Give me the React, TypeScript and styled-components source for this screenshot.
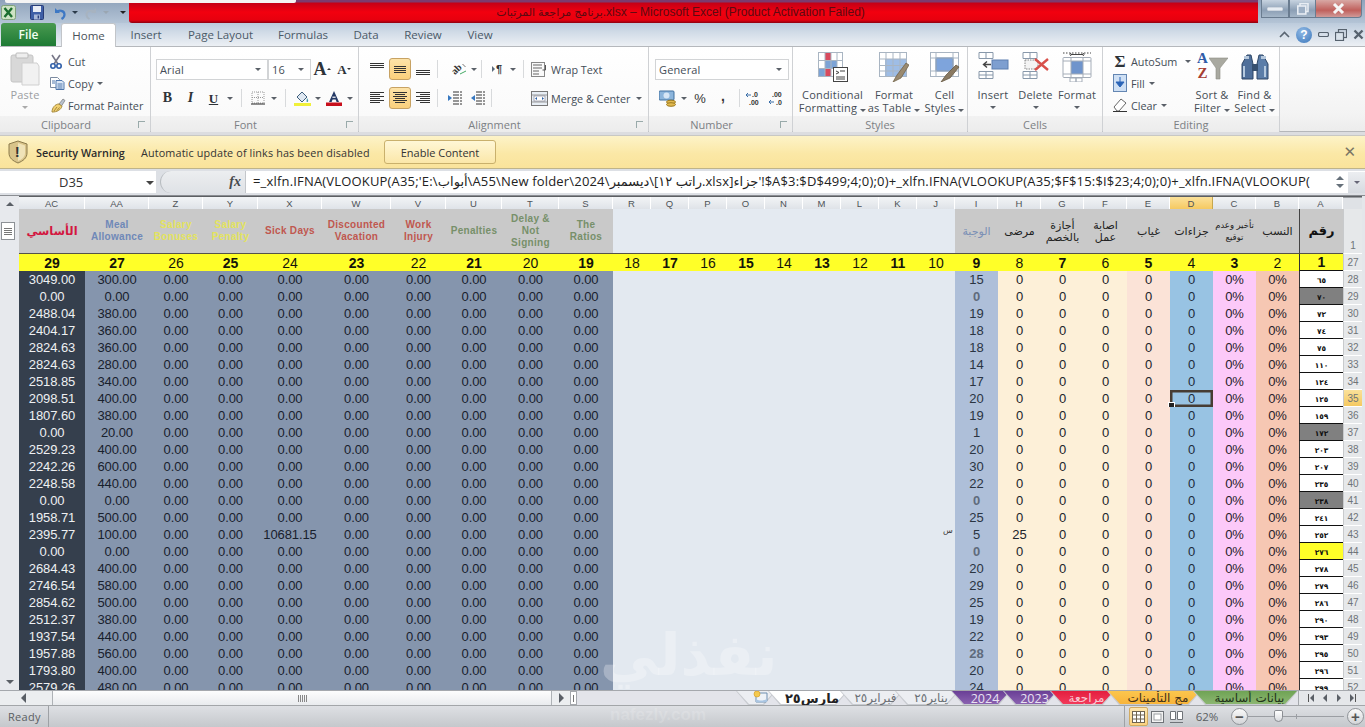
import React from "react";
import styled, { createGlobalStyle } from "styled-components";

const Global = createGlobalStyle`
  html, body { margin: 0; padding: 0; overflow: hidden; background: #fff; }
  * { box-sizing: border-box; }
`;
const UI = `"Open Sans", "Noto Sans", "DejaVu Sans", sans-serif`;
const CELL = `"Liberation Sans", "DejaVu Sans", sans-serif`;

const Root = styled.div`
  position: relative; width: 1365px; height: 727px; overflow: hidden;
  display: flex; flex-direction: column; font-family: ${UI}; font-size: 11px; color: #444d57;
`;
/* ---------- title bar ---------- */
const TitleBar = styled.div`
  height: 23px; flex: none; display: flex; background: linear-gradient(#8fa3bb, #b4c4d6);
`;
const TopSliver = styled.div`
  position: absolute; left: 5px; top: 0; width: 291px; height: 3px; background: #f4f4f4; border-radius: 0 0 2px 2px;
`;
const Qat = styled.div`
  width: 129px; flex: none; display: flex; align-items: center; padding-top: 2px;
`;
const QatSlot = styled.div<{ $w: number }>`
  width: ${p => p.$w}px; flex: none; display: flex; align-items: center; justify-content: center;
`;
const RedBar = styled.div`
  flex: 1; position: relative; display: flex; align-items: center; justify-content: center; white-space: pre;
  background: linear-gradient(#7c3b6e 0, #7c3b6e 2px, #c40016 3px, #f2000f 12px, #e6000e 20px, #8d0010 23px);
  border-radius: 0 0 0 3px; color: #5c0a12; font-size: 12px; font-family: ${CELL}; padding: 1px 26px 0 0;
`;
const TitleArabic = styled.span`
  font-size: 11px;
`;
const WinControls = styled.div`
  width: 107px; flex: none; display: flex; padding: 0 2px 5px 3px; align-items: stretch;
`;
const WinBtn = styled.div<{ $w: number; $close?: boolean }>`
  width: ${p => p.$w}px; flex: none; display: flex; align-items: center; justify-content: center;
  border: 1px solid #6a7c90; border-top: none; border-left-width: ${p => (p.$close ? 0 : 1)}px;
  background: ${p => (p.$close ? "linear-gradient(#d8a8a4, #c0605c 60%, #d09a98)" : "linear-gradient(#c7d3e0, #8c9fb5 60%, #a5b6c8)")};
  border-radius: ${p => (p.$close ? "0 0 4px 0" : "0")};
`;
/* ---------- tabs ---------- */
const TabStrip = styled.div`
  height: 24px; flex: none; display: flex; align-items: flex-end; padding-left: 1px;
  background: linear-gradient(#bccbdc, #d3dde8 45%, #ecf0f4); border-bottom: 1px solid #b5b8bc;
`;
const FileTab = styled.div`
  width: 55px; height: 23px; display: flex; align-items: center; justify-content: center; margin-right: 5px;
  background: linear-gradient(#4a9a50, #1d7a34); color: #f2fff2; font-size: 12px; font-weight: 600; border-radius: 3px 3px 0 0;
`;
const RibbonTab = styled.div<{ $on?: boolean; $w: number }>`
  width: ${p => p.$w}px; height: 23px; display: flex; align-items: center; justify-content: center; font-size: 11.5px;
  color: ${p => (p.$on ? "#4a525a" : "#4b5a68")};
  ${p => (p.$on ? "background:#fff; border:1px solid #c2c5c9; border-bottom:none; border-radius:3px 3px 0 0; margin-bottom:-1px; height:24px;" : "")}
`;
const StripEnd = styled.div`
  margin-left: auto; display: flex; align-items: center; height: 23px; padding-right: 1px; gap: 6px;
`;
/* ---------- ribbon ---------- */
const Ribbon = styled.div`
  height: 89px; flex: none; display: flex; background: #dcdde0; padding-bottom: 3px; border-bottom: 1px solid #c8c8c4;
`;
const Group = styled.div<{ $w: number }>`
  width: ${p => p.$w}px; flex: none; display: flex; flex-direction: column; border-right: 1px solid #cfd1d4; border-bottom: 1px solid #b5b7ba;
`;
const GroupBody = styled.div<{ $pad?: number }>`
  height: 69px; flex: none; display: flex; padding-left: ${p => p.$pad ?? 0}px; background: linear-gradient(#fff, #fafafa);
`;
const GroupLabel = styled.div<{ $launch?: boolean }>`
  position: relative; flex: 1; display: flex; align-items: center; justify-content: center; padding: 1px ${p => (p.$launch ? 18 : 0)}px 0 0;
  color: #7c8084; font-size: 11px; background: linear-gradient(#f2f2f2, #ececec);
`;
const Launcher = styled.span`
  position: absolute; right: 5px; top: 5px; width: 7px; height: 7px; border-left: 1px solid #9aa; border-top: 1px solid #9aa;
`;
const RibbonFill = styled.div`
  flex: 1; background: linear-gradient(#fff, #f3f3f3 80%, #ececec); border-bottom: 1px solid #b5b7ba;
`;
const StackCol = styled.div<{ $w?: number; $top?: number }>`
  ${p => (p.$w ? `width:${p.$w}px;flex:none;` : "")} display: flex; flex-direction: column; padding-top: ${p => p.$top ?? 3}px;
`;
const SmallRow = styled.div<{ $gap?: number }>`
  height: 22px; display: flex; align-items: center; gap: ${p => p.$gap ?? 5}px; white-space: nowrap; font-size: 10.8px;
`;
const ToolRows = styled.div<{ $pad: number }>`
  display: flex; flex-direction: column; padding: 11px 0 0 ${p => p.$pad}px; gap: 7px;
`;
const ToolRow = styled.div`
  height: 22px; display: flex; align-items: center;
`;
const Tool = styled.div<{ $w?: number; $on?: boolean; $ml?: number }>`
  width: ${p => p.$w ?? 22}px; height: 22px; flex: none; display: flex; align-items: center; justify-content: center;
  margin-left: ${p => p.$ml ?? 0}px;
  ${p => (p.$on ? "background:linear-gradient(#fde3a8,#fbd07c);border:1px solid #c7a263;border-radius:3px;" : "")}
`;
const ToolSep = styled.div<{ $w?: number }>`
  width: ${p => p.$w ?? 6}px; height: 18px; flex: none; position: relative;
  &::after { content: ""; position: absolute; left: 50%; top: 0; bottom: 0; width: 1px; background: #d8dadc; }
`;
const ToolGap = styled.div<{ $w: number }>`
  width: ${p => p.$w}px; flex: none;
`;
const Caret = styled.span<{ $ml?: number; $mr?: number; $mt?: number; $c?: string }>`
  display: inline-block; flex: none; width: 0; height: 0; border-left: 3px solid transparent; border-right: 3px solid transparent;
  border-top: 3px solid ${p => p.$c ?? "#5a6068"}; margin: ${p => p.$mt ?? 0}px ${p => p.$mr ?? 0}px 0 ${p => p.$ml ?? 0}px;
`;
const ComboBox = styled.div<{ $w: number }>`
  width: ${p => p.$w}px; height: 21px; flex: none; background: #fff; border: 1px solid #d2d4d6; display: flex; align-items: center;
  justify-content: space-between; padding: 0 6px 0 3px; font-size: 11px; letter-spacing: .15px;
`;
const FontGlyph = styled.span<{ $size: number; $i?: boolean; $u?: boolean; $c?: string; $sans?: boolean }>`
  font-family: ${p => (p.$sans ? CELL : `"Liberation Serif", serif`)}; font-weight: 700; font-size: ${p => p.$size}px; line-height: 1; color: ${p => p.$c ?? "#2e3338"};
  font-style: ${p => (p.$i ? "italic" : "normal")}; text-decoration: ${p => (p.$u ? "underline" : "none")};
`;
const SumBox = styled.span`
  width: 14px; flex: none; display: flex; justify-content: center;
`;
const TextTool = styled.div<{ $ml?: number }>`
  display: flex; align-items: center; gap: 3px; height: 22px; white-space: nowrap; font-size: 10.8px; margin-left: ${p => p.$ml ?? 0}px;
`;
const GlyphTool = styled(Tool)<{ $size: number; $bold?: boolean }>`
  font-size: ${p => p.$size}px; font-weight: ${p => (p.$bold ? 700 : 400)}; font-family: ${CELL}; color: #333; ${p => (p.$bold ? "padding-bottom:4px;" : "")}
`;
const InlineIcon = styled.span`
  display: inline-flex; align-items: center; gap: 1px;
`;
const BigBtn = styled.div<{ $w: number; $dim?: boolean }>`
  width: ${p => p.$w}px; flex: none; display: flex; flex-direction: column; align-items: center; padding-top: 5px;
  color: ${p => (p.$dim ? "#9b9ea2" : "#454d55")}; font-size: 11px; line-height: 13px; text-align: center; letter-spacing: .2px; white-space: nowrap;
`;
const BigIcon = styled.div`
  height: 36px; flex: none; display: flex; align-items: flex-start; justify-content: center;
`;
/* ---------- warning + formula ---------- */
const Warning = styled.div`
  height: 33px; flex: none; display: flex; align-items: center; padding: 0 9px 0 8px;
  background: linear-gradient(#fdf3c8, #fbe8a6 55%, #fae39b); border-bottom: 1px solid #bfb48a; color: #333;
`;
const WarnTitle = styled.b`
  font-size: 10.8px; margin-left: 8px; width: 105px; color: #2c2c2c; white-space: nowrap; font-weight: 600;
`;
const WarnText = styled.span`
  font-size: 10.8px; width: 243px; letter-spacing: .14px; white-space: nowrap;
`;
const WarnBtn = styled.div`
  width: 112px; height: 24px; display: flex; align-items: center; justify-content: center; font-size: 11px;
  border: 1px solid #c9b06c; border-radius: 3px; background: linear-gradient(#fff7d6, #fbe7a9);
`;
const WarnClose = styled.span`
  margin-left: auto; font-size: 15px; font-weight: 700; color: #7a7564; font-family: "DejaVu Sans", sans-serif;
`;
const FormulaBar = styled.div`
  height: 27px; flex: none; display: flex; padding: 2px 0 2px 0; background: #dde0e5; border-bottom: 1px solid #8a8d92;
`;
const NameBox = styled.div`
  width: 156px; flex: none; background: #fff; display: flex; align-items: center; position: relative; font-size: 13px; padding-left: 59px; color: #333;
`;
const NameCaret = styled(Caret)`
  position: absolute; right: 2px; top: 10px; border-left-width: 4px; border-right-width: 4px; border-top-width: 4px; border-top-color: #444;
`;
const FxPill = styled.div`
  width: 85px; margin-left: 4px; flex: none; display: flex; align-items: center; justify-content: flex-end; padding-right: 4px;
  border-radius: 12px 0 0 12px; background: linear-gradient(#eceef0, #dfe2e6); border-left: 1px solid #b8bcc0;
  font-family: "Liberation Serif", serif; font-style: italic; font-weight: 700; font-size: 14px; color: #46494d;
`;
const FormulaText = styled.div`
  flex: 1; min-width: 0; overflow: hidden; white-space: nowrap; background: #fff; border-left: 1px solid #c4c7cb; padding: 0 0 0 7px;
  font-size: 13px; line-height: 21px; color: #222; letter-spacing: .18px;
`;
const FormulaEnd = styled.div`
  width: 33px; flex: none; background: #fff; display: flex; align-items: center;
`;
const FormulaSpin = styled.div`
  width: 16px; display: flex; flex-direction: column; gap: 4px; align-items: center;
`;
const FormulaDown = styled.div`
  width: 17px; height: 21px; margin-left: auto; background: linear-gradient(#eceef1, #d6dae0); display: flex; align-items: center; justify-content: center;
`;
/* ---------- sheet ---------- */
const SheetArea = styled.div`
  height: 494px; flex: none; display: flex; overflow: hidden; background: #e4e6ea;
`;
const VScroll = styled.div`
  width: 19px; flex: none; position: relative; display: flex; flex-direction: column; align-items: center; padding: 6px 0 6px 0; justify-content: space-between;
  background: #e7e9ed;
`;
const SplitBox = styled.div`
  position: absolute; left: 1px; top: 26px; width: 14px; height: 18px; background: #fff; border: 1px solid #8d9196; display: flex; flex-direction: column;
  justify-content: center; gap: 1px; padding: 0 2px;
  & i { display: block; height: 1px; background: #777; }
`;
const Tri = styled.span<{ $dir: "up" | "down" | "left" | "right"; $s?: number; $c?: string }>`
  display: inline-block; width: 0; height: 0; flex: none;
  ${p => {
    const s = p.$s ?? 4; const c = p.$c ?? "#5a5f66";
    if (p.$dir === "up") return `border-left:${s}px solid transparent;border-right:${s}px solid transparent;border-bottom:${s}px solid ${c};`;
    if (p.$dir === "down") return `border-left:${s}px solid transparent;border-right:${s}px solid transparent;border-top:${s}px solid ${c};`;
    if (p.$dir === "left") return `border-top:${s}px solid transparent;border-bottom:${s}px solid transparent;border-right:${s}px solid ${c};`;
    return `border-top:${s}px solid transparent;border-bottom:${s}px solid transparent;border-left:${s}px solid ${c};`;
  }}
`;
const colWidths = [66, 64, 54, 55, 64, 69, 55, 56, 57, 54, 38, 38, 38, 38, 38, 38, 38, 38, 38, 43, 43, 43, 43, 43, 43, 43, 43, 44, 19];
const SheetGrid = styled.div`
  display: grid; flex: none; border-top: 1px solid #5c5f63; align-self: flex-start;
  grid-template-columns: ${colWidths.map(w => w + "px").join(" ")};
  grid-template-rows: 12px 45px 17px repeat(25, 17px);
`;
const ColHead = styled.div<{ $on?: boolean }>`
  display: flex; align-items: center; justify-content: center; font-family: ${CELL}; font-size: 9.5px; color: #4e5358; padding-top: 1px;
  background: ${p => (p.$on ? "linear-gradient(#fbe19a,#f5c961)" : "linear-gradient(#f2f4f6,#dfe3e8)")};
  border-right: 1px solid ${p => (p.$on ? "#c6a74e" : "#fff")};
`;
const Corner = styled.div`
  background: #dfe2e6; border-top: 1px solid #9a9da1;
`;
const HeadCell = styled.div<{ $c?: string; $blank?: boolean; $boxed?: boolean; $size?: number; $bold?: boolean }>`
  display: flex; align-items: center; justify-content: center; text-align: center; padding: 0 1px; white-space: nowrap;
  background: ${p => (p.$blank ? "#e4eaf1" : "#c9c9c9")}; color: ${p => p.$c ?? "#333"};
  font-family: ${CELL}; font-size: ${p => p.$size ?? 10}px; font-weight: ${p => (p.$bold === false ? 400 : 700)}; line-height: 12px; letter-spacing: .3px;
  border-bottom: 1px solid #55524a;
  ${p => (p.$boxed ? "border-left:1px solid #444;" : "")}
`;
const RowNum = styled.div<{ $on?: boolean; $end?: boolean }>`
  display: flex; align-items: flex-end; justify-content: center; font-family: ${CELL}; font-size: 10px; color: #6f7478; line-height: 14px;
  background: ${p => (p.$on ? "linear-gradient(#fbe19a,#f5c961)" : "#e6e8ea")}; border-bottom: 1px solid #fff; border-left: 1px solid #c8cacc;
`;
const NumCell = styled.div<{ $bold?: boolean; $boxed?: boolean }>`
  display: flex; align-items: center; justify-content: center; background: #ffff28; color: #14140a; font-family: ${CELL}; font-size: 14px;
  font-weight: ${p => (p.$bold ? 700 : 400)};
  ${p => (p.$boxed ? "border-left:1px solid #333;border-bottom:1px solid #111;" : "")}
`;
const TONES: Record<string, [string, string]> = {
  dark: ["#353f4d", "#eef0f2"], slate: ["#8595ad", "#18202c"], blank: ["#e3e9f0", "#333"], wage: ["#aebfd9", "#2a3442"],
  cream: ["#fdf0d8", "#20242a"], peach: ["#fbe3d7", "#20242a"], sky: ["#98c3e3", "#1d2b3a"], pink: ["#fcc9f9", "#26202a"], salmon: ["#f6c7b3", "#26202a"],
};
const DataCell = styled.div<{ $tone: string; $active?: boolean; $muted?: boolean }>`
  position: relative; display: flex; align-items: center; justify-content: center; font-family: ${CELL}; font-size: 13px; letter-spacing: -.1px;
  background: ${p => TONES[p.$tone][0]}; color: ${p => (p.$muted ? "#5f6b7c" : TONES[p.$tone][1])}; ${p => (p.$muted ? "font-weight:700;" : "")}
  ${p => (p.$active ? "box-shadow: inset 0 0 0 2.5px #463c33;" : "")}
  ${p => (p.$active ? `&::after{content:"";position:absolute;left:-2px;bottom:-2px;width:5px;height:5px;background:#222;border:1px solid #fff;}` : "")}
`;
const TinyMark = styled.span`
  position: absolute; left: 26px; top: 0; font-size: 8px; color: #333;
`;
const IdCell = styled.div<{ $fill?: string }>`
  display: flex; align-items: center; justify-content: center; background: ${p => p.$fill ?? "#fff"}; color: #111; font-family: "DejaVu Sans", sans-serif;
  font-size: 7.5px; font-weight: 700; letter-spacing: 2px; border-left: 1px solid #333; border-bottom: 1px solid #111; padding-top: 3px;
`;
/* ---------- tab bar ---------- */
const TabBar = styled.div`
  height: 16px; flex: none; display: flex; background: #e3e4ea; border-top: 1px solid #a5a8ad; border-bottom: 1px solid #a3a6a9;
`;
const HScroll = styled.div`
  width: 577px; flex: none; display: flex; align-items: center;
`;
const HArrow = styled.div<{ $w: number; $pr?: number }>`
  width: ${p => p.$w}px; flex: none; height: 100%; display: flex; align-items: center; justify-content: center; background: #eceef0; padding-right: ${p => p.$pr ?? 0}px;
`;
const HThumb = styled.div`
  flex: 1; height: 100%; display: flex; align-items: center; justify-content: center; gap: 1px; background: linear-gradient(#fdfdfd, #e9ebee);
  border-left: 1px solid #aeb2b6; border-right: 1px solid #aeb2b6;
  & i { display: block; width: 1px; height: 7px; background: #888; }
`;
const Splitter = styled.div`
  width: 7px; height: 100%; flex: none; margin-left: 0; background: #fff; border: 1px solid #a5a8ad; position: relative;
  &::after { content: ""; position: absolute; left: 2px; top: 3px; height: 7px; width: 1px; background: #777; }
`;
const TabFill = styled.div`
  flex: 1;
`;
const SheetTab = styled.div<{ $w: number; $bg?: string; $c?: string; $bold?: boolean; $size?: number; $latin?: boolean }>`
  position: relative; width: ${p => p.$w}px; flex: none; margin-left: -8px; padding-left: 8px; display: flex; align-items: center; justify-content: center;
  font-size: ${p => p.$size ?? 12}px; font-weight: ${p => (p.$bold ? 700 : 400)}; color: ${p => p.$c ?? "#6b7076"};
  font-family: ${p => (p.$latin ? UI : `"DejaVu Sans", sans-serif`)};
  clip-path: polygon(0 0, 100% 0, calc(100% - 12px) 100%, 12px 100%); background: #c8cbd0; white-space: nowrap;
  &::before { content: ""; position: absolute; inset: 0 1px 1px 1px; clip-path: polygon(0 0, 100% 0, calc(100% - 12px) 100%, 12px 100%); background: ${p => p.$bg ?? "#eceef2"}; }
  & > * { position: relative; }
`;
const TabNav = styled.div`
  width: 67px; flex: none; display: flex; align-items: center; justify-content: space-around; padding: 0 4px; background: #e5e7ea; border-left: 1px solid #a5a8ad;
`;
/* ---------- status ---------- */
const StatusBar = styled.div`
  flex: 1; display: flex; align-items: center; background: linear-gradient(#dee0e4, #c5c8cc); color: #5a5e62; font-size: 11px;
`;
const StatusText = styled.div`
  width: 49px; padding-left: 8px; height: 100%; display: flex; align-items: center; border-right: 1px solid #9ea1a5; letter-spacing: .3px;
`;
const ViewGroup = styled.div`
  margin-left: auto; display: flex; align-items: center; height: 100%; border-left: 1px solid #9ea1a5; padding-left: 4px; width: 241px;
`;
const ViewBtn = styled.div<{ $on?: boolean }>`
  width: 19px; height: 19px; flex: none; display: flex; align-items: center; justify-content: center;
  ${p => (p.$on ? "background:linear-gradient(#fde6b0,#fbd280);border:1px solid #d2ab62;border-radius:2px;" : "")}
`;
const ZoomPct = styled.span`
  width: 42px; text-align: center; font-size: 11.5px;
`;
const RoundBtn = styled.div`
  width: 17px; height: 17px; flex: none; border-radius: 50%; border: 1px solid #8f9398; background: linear-gradient(#fafafa, #d3d5d8);
  display: flex; align-items: center; justify-content: center; font-family: ${CELL}; font-size: 15px; font-weight: 700; line-height: 1; color: #555;
  margin-left: 3px;
`;
const Slider = styled.div`
  position: relative; width: 96px; height: 1px; flex: none; background: #9b9ea3;
`;
const Thumb = styled.div`
  position: absolute; left: 26px; top: -6px; width: 9px; height: 12px; background: linear-gradient(#fff, #d8dade); border: 1px solid #8a8d92; border-radius: 2px 2px 5px 5px;
`;
const Tick = styled.div`
  position: absolute; left: 48px; top: -2px; width: 1px; height: 5px; background: #9b9ea3;
`;
/* ---------- watermark ---------- */
const WatermarkBig = styled.div`
  position: absolute; left: 600px; top: 620px; font-family: "DejaVu Sans", sans-serif; font-weight: 700; font-size: 58px; line-height: 70px;
  color: rgba(255, 255, 255, .28); pointer-events: none; letter-spacing: 2px;
`;
const WatermarkSmall = styled.div`
  position: absolute; left: 610px; top: 705px; font-family: ${CELL}; font-weight: 700; font-size: 17px; line-height: 20px; color: rgba(255, 255, 255, .16); pointer-events: none;
`;
const HelpBadge = styled.span`
  width: 16px; height: 16px; border-radius: 8px; background: radial-gradient(circle at 40% 30%, #8fb8e4, #3c78bc); color: #fff; font-family: ${CELL};
  font-weight: 700; font-size: 12px; display: flex; align-items: center; justify-content: center;
`;
const SortLetters = styled.div`
  display: flex; flex-direction: column; width: 13px; font-family: "Liberation Serif", serif; font-weight: 700; font-size: 15px; line-height: 15px; margin-top: -1px;
`;
const SortA = styled.span`
  color: #2f5ca8;
`;
const SortZ = styled.span`
  color: #a63f33;
`;
const SortWrap = styled.div`
  display: flex; width: 32px; height: 30px;
`;

/* ---------- icons ---------- */
const S = (p: React.SVGProps<SVGSVGElement> & { w: number; h: number }) => {
  const { w, h, ...r } = p;
  return <svg width={w} height={h} viewBox={`0 0 ${w} ${h}`} {...r} />;
};
const ExcelLogo = () => (
  <S w={15} h={15}><rect x=".5" y=".5" width="14" height="14" rx="2" fill="#cde3c4" stroke="#7ea37a" /><path d="M3.5 3 L11 12 M11 3 L3.5 12" stroke="#1b6e2e" strokeWidth="2.4" /></S>
);
const SaveIcon = () => (
  <S w={14} h={15}><rect x=".5" y=".5" width="13" height="14" rx="1" fill="#3f5fa6" stroke="#283c78" /><rect x="3" y="1" width="8" height="6" fill="#e9edf5" /><rect x="4" y="9.5" width="6" height="5" fill="#a9b8d8" /><rect x="7.6" y="10.5" width="1.5" height="3" fill="#283c78" /></S>
);
const UndoIcon = ({ c = "#3e78c4" }: { c?: string }) => (
  <S w={14} h={14}><path d="M2 2v5h5" fill={c} /><path d="M3 6.5C6 3.5 11.5 4.5 11.5 8.5c0 2-1.2 3.5-3 4.5" fill="none" stroke={c} strokeWidth="2.2" /></S>
);
const RedoIcon = () => (
  <S w={14} h={14}><path d="M12 2v5H7" fill="#a7b3c0" /><path d="M11 6.5C8 3.5 2.5 4.5 2.5 8.5c0 2 1.2 3.5 3 4.5" fill="none" stroke="#a7b3c0" strokeWidth="2" /></S>
);
const PasteIcon = () => (
  <S w={30} h={34}><rect x="1" y="3" width="22" height="27" rx="2" fill="#d8d8d8" stroke="#c4c4c4" /><rect x="6" y="1" width="12" height="5" rx="1" fill="#eee" stroke="#bbb" /><path d="M12 11h15l2 3v19H12z" fill="#f1f1f1" stroke="#cfcfcf" /></S>
);
const CutIcon = () => (
  <S w={12} h={15}><path d="M2 1l6 9M10 1L4 10" stroke="#778" strokeWidth="1.6" /><circle cx="3" cy="12" r="2.2" fill="none" stroke="#2f5ea8" strokeWidth="1.6" /><circle cx="9" cy="12" r="2.2" fill="none" stroke="#2f5ea8" strokeWidth="1.6" /></S>
);
const CopyIcon = () => (
  <S w={15} h={13}><path d="M.5 .5h7l2 2v8h-9z" fill="#fff" stroke="#7b8aa0" /><path d="M6 3.5h6l2 2v7H6z" fill="#dbe7f6" stroke="#4f76ac" /><path d="M7.5 7h5M7.5 9h5M7.5 11h5M2 4h3M2 6h3" stroke="#4f76ac" /></S>
);
const BrushIcon = () => (
  <S w={16} h={16}><path d="M9 7l4-5 2 1.5-3.5 5.5z" fill="#b9c2ce" stroke="#777" strokeWidth=".7" /><path d="M2 15c0-4 3-8 7-8l3 2.2c-1 3.5-5 6-10 5.8z" fill="#f0cf70" stroke="#a5893c" /><path d="M4 14l3-4M7 13.5l2.5-3" stroke="#a5893c" /></S>
);
const LinesIcon = ({ rows, w = 14 }: { rows: [number, number, number][]; w?: number }) => (
  <S w={w} h={14}>{rows.map(([y, a, b], i) => <rect key={i} x={a} y={y} width={b - a} height="1" fill="#333" />)}</S>
);
const evenRows = (ys: number[], wide: [number, number], narrow: [number, number]) =>
  ys.map((y, i) => (i % 2 ? ([y, ...narrow] as [number, number, number]) : ([y, ...wide] as [number, number, number])));
const BorderIcon = () => (
  <S w={14} h={14}><rect x="1" y="1" width="12" height="11" fill="none" stroke="#999" strokeDasharray="1 1" /><path d="M7 1v11M1 6.5h12" stroke="#999" strokeDasharray="1 1" /><path d="M0 13h14" stroke="#222" /></S>
);
const FillIcon = () => (
  <S w={17} h={16}><path d="M3 7l5-5 5 5-5 5z" fill="#dfe8f2" stroke="#3f5f7d" /><path d="M13 8c1 1.5 1.5 2.5 1 3.5s-1.5.4-1.5-.5z" fill="#49a" /><rect x="0" y="13" width="17" height="3" fill="#f0f03a" /></S>
);
const ColorA = () => (
  <S w={16} h={16}><path d="M8 1 L3 12 h2.6 l1-2.5h3 l1 2.5H13z" fill="#253a66" /><rect x="6.4" y="6.6" width="3.2" height="1.2" fill="#fff" /><rect y="12.5" width="16" height="3.5" fill="#c80f1c" /></S>
);
const OrientIcon = () => (
  <S w={18} h={16}><g transform="rotate(-45 7 8)"><text x="1" y="11" fontSize="10" fontWeight="700" fontFamily="Liberation Serif" fill="#333">ab</text></g><path d="M10 13l6-3" stroke="#4a6" /><path d="M12.5 3l3 3" stroke="#777" /></S>
);
const RtlIcon = () => (
  <InlineIcon>
    <Tri $dir="right" $s={3} $c="#5a6a7a" />
    <FontGlyph $size={11} $sans>¶</FontGlyph>
  </InlineIcon>
);
const IndentIcon = ({ out }: { out?: boolean }) => (
  <S w={15} h={14}>
    <path d="M6 1h9M6 4h9M6 7h9M6 10h9M6 13h9" stroke="#333" strokeDasharray="6 1" />
    <path d={out ? "M1 7l4-3v6z" : "M5 7L1 4v6z"} fill="#3778c0" />
  </S>
);
const WrapIcon = () => (
  <S w={17} h={15}><rect x=".5" y=".5" width="13" height="14" fill="#fafafa" stroke="#888" /><path d="M2 3h9M2 6h9M2 9h6M2 12h6" stroke="#666" /><path d="M14.5 3v5h-3" fill="none" stroke="#555" /></S>
);
const MergeIcon = () => (
  <S w={17} h={15}><rect x=".5" y=".5" width="16" height="14" fill="#e8eef5" stroke="#777" /><path d="M1 4h15M1 11h15" stroke="#999" /><rect x="3" y="5" width="11" height="5" fill="#fff" stroke="#667" strokeWidth=".5" /><path d="M4 7.5l2-1.5v3zM13 7.5l-2-1.5v3z" fill="#2b5fa6" /></S>
);
const CurrencyIcon = () => (
  <S w={17} h={17}><rect x="0" y="1" width="15" height="9" rx="1" fill="#8cb5dc" stroke="#41709f" /><ellipse cx="7.5" cy="5.5" rx="3" ry="3" fill="#d6e6f6" /><ellipse cx="12" cy="12" rx="4.5" ry="1.8" fill="#e2b94f" stroke="#9b7a20" /><ellipse cx="12" cy="14.5" rx="4.5" ry="1.8" fill="#e2b94f" stroke="#9b7a20" /></S>
);
const DecIcon = ({ inc }: { inc?: boolean }) => (
  <S w={18} h={15}>
    <text x={inc ? 3 : 6} y="6" fontSize="7" fontWeight="700" fontFamily="Liberation Sans" fill="#333">{inc ? ".00" : ".0"}</text>
    <text x={inc ? 7 : 3} y="14" fontSize="7" fontWeight="700" fontFamily="Liberation Sans" fill="#333">{inc ? ".0" : ".00"}</text>
    <path d={inc ? "M0 11h5M2 9l-2 2 2 2" : "M0 4h5M2 2L0 4l2 2"} stroke="#3a6ea8" fill="none" />
  </S>
);
const CondFmtIcon = () => (
  <S w={30} h={30}>
    <rect x=".5" y=".5" width="24" height="24" fill="#fff" stroke="#a9b5c2" />
    <rect x="7" y="1" width="6" height="8" fill="#d84a5d" /><rect x="7" y="9" width="12" height="7" fill="#7ca3d6" /><rect x="1" y="17" width="6" height="7" fill="#7ca3d6" />
    <rect x="7" y="17" width="6" height="7" fill="#d84a5d" />
    <path d="M1 8.5h24M1 16.5h24M7 1v24M13 1v24M19 1v24" stroke="#a9b5c2" />
    <rect x="15.5" y="15.5" width="14" height="14" fill="#fff" stroke="#444" />
    <path d="M18 19l3 1.5-3 1.5M22 19h5M18 25h9M18 27h9" stroke="#444" fill="none" />
  </S>
);
const FormatTableIcon = () => (
  <S w={30} h={30}>
    <rect x=".5" y=".5" width="27" height="24" fill="#fff" stroke="#a9b5c2" />
    <rect x="6" y="7" width="21" height="17" fill="#9ebde6" />
    <path d="M1 7h27M1 13.5h27M1 19h27M7 1v24M14 1v24M21 1v24" stroke="#a9b5c2" />
    <path d="M14 30l4-7 9-12 3 2-8 13z" fill="#9a8a70" stroke="#6b5b40" strokeWidth=".7" />
  </S>
);
const CellStylesIcon = () => (
  <S w={30} h={30}>
    <rect x=".5" y=".5" width="28" height="24" fill="#fff" stroke="#a9b5c2" />
    <rect x="6" y="6" width="17" height="13" fill="#7ea4dc" stroke="#5379ad" />
    <path d="M6 1v24M23 1v24M1 6h27M1 19h27" stroke="#a9b5c2" />
    <path d="M11 30l5-7 10-10 3 2-9 11z" fill="#8a7a62" stroke="#5f5038" strokeWidth=".7" />
  </S>
);
const InsertIcon = () => (
  <S w={32} h={28}>
    <path d="M2 .5h14v6H2zM2 .5h7v6M2 19.5h14v7H2zM9 19.5v7M2 23h14" fill="#fff" stroke="#8898aa" />
    <rect x="15" y="8" width="16" height="9" fill="#7e9fd0" stroke="#5c7eb0" />
    <path d="M14 12.5H7M10 9.5l-3.5 3 3.5 3" stroke="#444" strokeWidth="1.4" fill="none" />
  </S>
);
const DeleteIcon = () => (
  <S w={28} h={28}>
    <path d="M1 .5h14v6H1zM8 .5v6M1 19.5h14v7H1zM8 19.5v7M1 23h14" fill="#fff" stroke="#8898aa" />
    <rect x="3" y="8" width="13" height="9" fill="#f4f4f4" stroke="#888" strokeDasharray="1.5 1" />
    <path d="M13 7l13 11M26 7L13 18" stroke="#d8504a" strokeWidth="2.4" />
  </S>
);
const FormatIcon = () => (
  <S w={30} h={30}>
    <path d="M1 1h28" stroke="#444" strokeDasharray="1.5 1.5" /><path d="M9 2.5h12M9 1l-1 1.5L9 4M21 1l1 1.5L21 4" stroke="#444" fill="none" />
    <rect x="1" y="5.5" width="28" height="20" rx="1" fill="#fff" stroke="#a5adb8" />
    <rect x="9" y="9" width="12" height="13" fill="#6f94cc" />
    <path d="M1 9h28M1 22h28M9 5v21M21 5v21" stroke="#a5adb8" />
    <path d="M8 26h6v4H8zM14 26h6v4h-6z" fill="#fff" stroke="#a5adb8" />
  </S>
);
const SortIcon = () => (
  <SortWrap>
    <SortLetters><SortA>A</SortA><SortZ>Z</SortZ></SortLetters>
    <S w={19} h={30}><path d="M0 6 H19 L11 16 V27 L7 27 V16z" fill="#a9a9a0" stroke="#8d8d84" strokeWidth=".6" /></S>
  </SortWrap>
);
const FindIcon = () => (
  <S w={30} h={28}>
    <path d="M2 27V12l5-9h4l2 9v15z" fill="#4f6f9a" stroke="#2e4766" />
    <path d="M28 27V12l-5-9h-4l-2 9v15z" fill="#5b7da8" stroke="#2e4766" />
    <rect x="12" y="12" width="6" height="7" fill="#37506f" />
    <rect x="4" y="4" width="5" height="3" fill="#b6c8dc" /><rect x="21" y="4" width="5" height="3" fill="#b6c8dc" />
    <path d="M4 14v11M25 14v11" stroke="#b6cadf" strokeWidth="2" />
  </S>
);
const FillDownIcon = () => (
  <S w={14} h={18}><rect x=".5" y=".5" width="13" height="17" fill="#cfe0f4" stroke="#6486b2" /><path d="M7 3v8M3 8l4 5 4-5z" fill="#2a65b8" stroke="#2a65b8" /></S>
);
const ClearIcon = () => (
  <S w={14} h={14}><path d="M1 9l7-8 5 4-7 8H4z" fill="#fff" stroke="#666" /><path d="M0 13.5h14" stroke="#333" /></S>
);
const ShieldIcon = () => (
  <S w={20} h={24}>
    <path d="M10 1l9 3v9c0 5-4 8-9 10C5 21 1 18 1 13V4z" fill="#d9c48a" stroke="#8c7b4c" />
    <path d="M10 3l7 2.4V13c0 4-3 6.4-7 8z" fill="#f0e3b8" />
    <text x="6.8" y="17" fontSize="15" fontWeight="700" fontFamily="Liberation Sans" fill="#333">!</text>
  </S>
);
const NewSheetIcon = () => (
  <S w={15} h={13}><path d="M3 3h11v9H3z" fill="#eef2f7" stroke="#6f8fb0" /><path d="M3 9c3 2 8 2 11 0v3H3z" fill="#a9c5e2" /><circle cx="4" cy="4" r="3" fill="#f4c94e" stroke="#d59a1a" strokeWidth=".6" /></S>
);
const GridViewIcon = () => (
  <S w={13} h={12}><rect x=".5" y=".5" width="12" height="11" fill="#fff" stroke="#6e6350" /><path d="M1 4h11M1 8h11M4.5 1v10M8.5 1v10" stroke="#6e6350" /></S>
);
const PageViewIcon = () => (
  <S w={13} h={12}><rect x=".5" y=".5" width="12" height="11" fill="#f2f2f2" stroke="#6f7378" /><rect x="3" y="3" width="7" height="6" fill="#fff" stroke="#9a9da1" /></S>
);
const BreakViewIcon = () => (
  <S w={13} h={12}><path d="M.5 .5h5v8h-5zM7.5 .5h5v8h-5z" fill="#fff" stroke="#6f7378" /><path d="M0 11.5h13" stroke="#6f7378" /></S>
);
const Dash = () => <S w={16} h={4}><rect width="16" height="4" rx="1" fill="#e8edf3" stroke="#7d8ea2" strokeWidth=".5" /></S>;
const RestoreGlyph = () => <S w={12} h={12}><rect x="3" y=".5" width="8" height="8" fill="none" stroke="#e8edf3" strokeWidth="1.6" /><rect x=".8" y="3" width="8" height="8" fill="#9eb0c5" stroke="#e8edf3" strokeWidth="1.6" /></S>;
const CloseGlyph = () => <S w={13} h={11}><path d="M2 1l9 9M11 1l-9 9" stroke="#f6f6f6" strokeWidth="3" /></S>;
const ChevronUp = () => <S w={11} h={8}><path d="M1 6l4.5-4.5L10 6" fill="none" stroke="#5a6672" strokeWidth="1.6" /></S>;
const MinGlyph = () => <S w={11} h={5}><rect x=".5" y=".5" width="10" height="4" rx="1.5" fill="none" stroke="#56626e" strokeWidth="1.2" /></S>;
const DocRestore = () => <S w={12} h={12}><rect x="3.5" y=".5" width="8" height="8" fill="none" stroke="#56626e" strokeWidth="1.2" /><rect x=".5" y="3.5" width="8" height="8" fill="#d9e2ea" stroke="#56626e" strokeWidth="1.2" /></S>;
const DocClose = () => <S w={11} h={11}><path d="M1.5 1.5l8 8M9.5 1.5l-8 8" stroke="#56626e" strokeWidth="2.4" /></S>;
const BarTri = ({ dir, bar }: { dir: "left" | "right"; bar?: boolean }) => (
  <InlineIcon>
    {bar && dir === "left" ? <S w={1} h={8}><rect width="1" height="8" fill="#555" /></S> : null}
    <Tri $dir={dir} $s={4} $c="#5a5f66" />
    {bar && dir === "right" ? <S w={1} h={8}><rect width="1" height="8" fill="#555" /></S> : null}
  </InlineIcon>
);

/* ---------- data ---------- */
const ac = ["3049.00","0.00","2488.04","2404.17","2824.63","2824.63","2518.85","2098.51","1807.60","0.00","2529.23","2242.26","2248.58","0.00","1958.71","2395.77","0.00","2684.43","2746.54","2854.62","2512.37","1937.54","1957.88","1793.80","2579.26"];
const aa = ["300.00","0.00","380.00","360.00","360.00","280.00","340.00","400.00","380.00","20.00","400.00","600.00","440.00","0.00","500.00","100.00","0.00","400.00","580.00","500.00","380.00","440.00","560.00","400.00","480.00"];
const wage = ["15","0","19","18","18","14","17","20","19","1","20","30","22","0","25","5","0","20","29","25","19","22","28","20","24"];
const ids = ["٦٥","٧٠","٧٢","٧٤","٧٥","١١٠","١٢٤","١٢٥","١٥٩","١٧٢","٢٠٣","٢٠٧","٢٣٥","٢٣٨","٢٤١","٢٥٢","٢٧٦","٢٧٨","٢٧٩","٢٨٦","٢٩٠","٢٩٣","٢٩٥","٢٩٦","٢٩٩"];
const letters = ["AC","AA","Z","Y","X","W","V","U","T","S","R","Q","P","O","N","M","L","K","J","I","H","G","F","E","D","C","B","A"];
const OLIVE = "#77906a", RED = "#c0574f", YEL = "#e3e35e", BLUE = "#6f88b8";
type H = { t?: string[]; c?: string; size?: number; bold?: boolean };
const heads: H[] = [
  { t: ["الأساسي"], c: "#d3163f", size: 11.5 },
  { t: ["Meal", "Allowance"], c: BLUE },
  { t: ["Salary", "Bonuses"], c: YEL },
  { t: ["Salary", "Penalty"], c: YEL },
  { t: ["Sick Days"], c: RED },
  { t: ["Discounted", "Vacation"], c: RED },
  { t: ["Work", "Injury"], c: RED },
  { t: ["Penalties"], c: OLIVE },
  { t: ["Delay &", "Not", "Signing"], c: OLIVE },
  { t: ["The", "Ratios"], c: OLIVE },
  {},{},{},{},{},{},{},{},{},
  { t: ["الوجبة"], c: "#7a8fb5", size: 11, bold: false },
  { t: ["مرضى"], c: "#222", size: 11, bold: false },
  { t: ["أجازة", "بالخصم"], c: "#222", size: 11, bold: false },
  { t: ["اصابة", "عمل"], c: "#222", size: 11, bold: false },
  { t: ["غياب"], c: "#222", size: 11, bold: false },
  { t: ["جزاءات"], c: "#222", size: 11, bold: false },
  { t: ["تأخير وعدم", "توقيع"], c: "#222", size: 8.5, bold: false },
  { t: ["النسب"], c: "#222", size: 11, bold: false },
  { t: ["رقم"], c: "#111", size: 13 },
];
const numLabel = [29,27,26,25,24,23,22,21,20,19,18,17,16,15,14,13,12,11,10,9,8,7,6,5,4,3,2,1];
const boldNum = (n: number) => n % 2 === 1 || n === 29 || n === 27;
const cols = letters.length;

const cellFor = (col: number, r: number): { tone: string; text: string } => {
  if (col === 0) return { tone: "dark", text: ac[r] };
  if (col === 1) return { tone: "slate", text: aa[r] };
  if (col <= 9) return { tone: "slate", text: col === 4 && r === 15 ? "10681.15" : "0.00" };
  if (col <= 18) return { tone: "blank", text: "" };
  if (col === 19) return { tone: "wage", text: wage[r] };
  if (col === 20) return { tone: "cream", text: r === 15 ? "25" : "0" };
  if (col <= 22) return { tone: "cream", text: "0" };
  if (col === 23) return { tone: "peach", text: "0" };
  if (col === 24) return { tone: "sky", text: "0" };
  if (col === 25) return { tone: "pink", text: "0%" };
  return { tone: "salmon", text: "0%" };
};

const Sheet = () => (
  <SheetGrid>
    {letters.map(l => <ColHead key={l} $on={l === "D"}>{l}</ColHead>)}
    <Corner />
    {heads.map((h, i) => (
      <HeadCell key={i} $blank={!h.t} $c={h.c} $size={h.size} $bold={h.bold} $boxed={i === cols - 1}>
        <div>{h.t?.map((x, j) => <div key={j}>{x}</div>)}</div>
      </HeadCell>
    ))}
    <RowNum>1</RowNum>
    {numLabel.map((n, i) => <NumCell key={i} $bold={boldNum(n)} $boxed={i === cols - 1}>{n}</NumCell>)}
    <RowNum>27</RowNum>
    {ac.map((_, r) => (
      <React.Fragment key={r}>
        {letters.slice(0, -1).map((_l, c) => {
          const d = cellFor(c, r);
          return (
            <DataCell key={c} $tone={d.tone} $active={c === 24 && r === 7} $muted={c === 19 && (d.text === "0" || r === 22)}>
              {d.text}
              {c === 18 && r === 15 ? <TinyMark>س</TinyMark> : null}
            </DataCell>
          );
        })}
        <IdCell $fill={r === 1 || r === 9 || r === 13 ? "#808080" : r === 16 ? "#ffff28" : undefined}>{ids[r]}</IdCell>
        <RowNum $on={r === 7}>{r + 28}</RowNum>
      </React.Fragment>
    ))}
  </SheetGrid>
);

const formula = "=_xlfn.IFNA(VLOOKUP(A35;'E:\\أبواب\\A55\\New folder\\2024\\ديسمبر\\[راتب ١٢.xlsx]جزاء'!$A$3:$D$499;4;0);0)+_xlfn.IFNA(VLOOKUP(A35;$F$15:$I$23;4;0);0)+_xlfn.IFNA(VLOOKUP(";

const App = () => (
  <Root>
    <Global />
    <TitleBar>
      <Qat>
        <QatSlot $w={17}><ExcelLogo /></QatSlot>
        <QatSlot $w={11} />
        <QatSlot $w={18}><SaveIcon /></QatSlot>
        <QatSlot $w={4} />
        <QatSlot $w={20}><UndoIcon /></QatSlot>
        <QatSlot $w={10}><Caret $c="#2b3a4a" /></QatSlot>
        <QatSlot $w={22}><RedoIcon /></QatSlot>
        <QatSlot $w={8}><Caret $c="#9aa6b2" /></QatSlot>
        <QatSlot $w={8} />
        <QatSlot $w={10}><Caret $c="#222" /></QatSlot>
      </Qat>
      <RedBar><TitleArabic>برنامج مراجعة المرتبات</TitleArabic>.xlsx – Microsoft Excel (Product Activation Failed)</RedBar>
      <WinControls>
        <WinBtn $w={28}><Dash /></WinBtn>
        <WinBtn $w={27}><RestoreGlyph /></WinBtn>
        <WinBtn $w={46} $close><CloseGlyph /></WinBtn>
      </WinControls>
    </TitleBar>
    <TopSliver />
    <TabStrip>
      <FileTab>File</FileTab>
      <RibbonTab $w={55} $on>Home</RibbonTab>
      <RibbonTab $w={60}>Insert</RibbonTab>
      <RibbonTab $w={89}>Page Layout</RibbonTab>
      <RibbonTab $w={76}>Formulas</RibbonTab>
      <RibbonTab $w={50}>Data</RibbonTab>
      <RibbonTab $w={64}>Review</RibbonTab>
      <RibbonTab $w={50}>View</RibbonTab>
      <StripEnd>
        <ChevronUp /><HelpBadge>?</HelpBadge><MinGlyph /><DocRestore /><DocClose />
      </StripEnd>
    </TabStrip>
    <Ribbon>
      <Group $w={151}>
        <GroupBody>
          <BigBtn $w={50} $dim>
            <BigIcon><PasteIcon /></BigIcon>
            Paste
            <Caret $c="#aaa" $mt={5} />
          </BigBtn>
          <StackCol>
            <SmallRow $gap={6}><CutIcon /> Cut</SmallRow>
            <SmallRow $gap={3}><CopyIcon /> Copy <Caret $ml={1} /></SmallRow>
            <SmallRow $gap={2}><BrushIcon /><span>Format Painter</span></SmallRow>
          </StackCol>
        </GroupBody>
        <GroupLabel $launch>Clipboard<Launcher /></GroupLabel>
      </Group>
      <Group $w={208}>
        <GroupBody>
          <ToolRows $pad={5}>
            <ToolRow>
              <ComboBox $w={112}>Arial<Caret /></ComboBox>
              <ComboBox $w={43}>16<Caret /></ComboBox>
              <Tool $w={22}><FontGlyph $size={18}>A</FontGlyph><Tri $dir="up" $s={2} $c="#333" /></Tool>
              <Tool $w={22}><FontGlyph $size={13}>A</FontGlyph><Tri $dir="down" $s={2} $c="#333" /></Tool>
            </ToolRow>
            <ToolRow>
              <Tool $w={23}><FontGlyph $size={14}>B</FontGlyph></Tool>
              <Tool $w={23}><FontGlyph $size={14} $i>I</FontGlyph></Tool>
              <Tool $w={23}><FontGlyph $size={13} $u>U</FontGlyph></Tool>
              <Tool $w={10}><Caret /></Tool>
              <ToolSep $w={12} />
              <Tool $w={22}><BorderIcon /></Tool>
              <Tool $w={10}><Caret /></Tool>
              <ToolSep $w={12} />
              <Tool $w={22}><FillIcon /></Tool>
              <Tool $w={9}><Caret /></Tool>
              <Tool $w={24}><ColorA /></Tool>
              <Tool $w={8}><Caret /></Tool>
            </ToolRow>
          </ToolRows>
        </GroupBody>
        <GroupLabel $launch>Font<Launcher /></GroupLabel>
      </Group>
      <Group $w={290}>
        <GroupBody>
          <ToolRows $pad={7}>
            <ToolRow>
              <Tool><LinesIcon rows={evenRows([1, 3, 5], [0, 14], [0, 14])} /></Tool>
              <Tool $ml={1} $on><LinesIcon rows={evenRows([4, 6, 8, 10], [1, 13], [1, 13])} /></Tool>
              <Tool $ml={1}><LinesIcon rows={evenRows([8, 10, 12], [0, 14], [0, 14])} /></Tool>
              <ToolSep $w={6} />
              <Tool $ml={8}><OrientIcon /></Tool>
              <Tool $w={8}><Caret /></Tool>
              <ToolSep $w={6} />
              <Tool $ml={2} $w={22}><RtlIcon /></Tool>
              <Tool $w={9}><Caret /></Tool>
              <ToolSep $w={12} />
              <TextTool $ml={2}><WrapIcon /> Wrap Text</TextTool>
            </ToolRow>
            <ToolRow>
              <Tool><LinesIcon rows={evenRows([1, 3, 5, 7, 9, 11], [0, 14], [0, 10])} /></Tool>
              <Tool $ml={1} $on><LinesIcon rows={evenRows([1, 3, 5, 7, 9, 11], [0, 14], [2, 12])} /></Tool>
              <Tool $ml={1}><LinesIcon rows={evenRows([1, 3, 5, 7, 9, 11], [0, 14], [4, 14])} /></Tool>
              <ToolSep $w={6} />
              <Tool $ml={4} $w={21}><IndentIcon /></Tool>
              <Tool $ml={2} $w={21}><IndentIcon out /></Tool>
              <ToolSep $w={6} />
              <ToolGap $w={36} />
              <TextTool $ml={1}><MergeIcon /> Merge &amp; Center <Caret $ml={3} /></TextTool>
            </ToolRow>
          </ToolRows>
        </GroupBody>
        <GroupLabel $launch>Alignment<Launcher /></GroupLabel>
      </Group>
      <Group $w={144}>
        <GroupBody>
          <ToolRows $pad={6}>
            <ToolRow>
              <ComboBox $w={134}>General<Caret /></ComboBox>
            </ToolRow>
            <ToolRow>
              <Tool $w={24}><CurrencyIcon /></Tool>
              <Tool $w={9}><Caret /></Tool>
              <GlyphTool $w={24} $size={13}>%</GlyphTool>
              <GlyphTool $w={22} $size={14} $bold>,</GlyphTool>
              <ToolSep $w={10} />
              <Tool $w={22}><DecIcon /></Tool>
              <Tool $w={23}><DecIcon inc /></Tool>
            </ToolRow>
          </ToolRows>
        </GroupBody>
        <GroupLabel $launch>Number<Launcher /></GroupLabel>
      </Group>
      <Group $w={175}>
        <GroupBody $pad={8}>
          <BigBtn $w={63}><BigIcon><CondFmtIcon /></BigIcon>Conditional<span>Formatting <Caret /></span></BigBtn>
          <BigBtn $w={60}><BigIcon><FormatTableIcon /></BigIcon>Format<span>as Table <Caret /></span></BigBtn>
          <BigBtn $w={41}><BigIcon><CellStylesIcon /></BigIcon>Cell<span>Styles <Caret /></span></BigBtn>
        </GroupBody>
        <GroupLabel>Styles</GroupLabel>
      </Group>
      <Group $w={135}>
        <GroupBody $pad={5}>
          <BigBtn $w={40}><BigIcon><InsertIcon /></BigIcon>Insert<Caret $mt={5} /></BigBtn>
          <BigBtn $w={45}><BigIcon><DeleteIcon /></BigIcon>Delete<Caret $mt={5} /></BigBtn>
          <BigBtn $w={38}><BigIcon><FormatIcon /></BigIcon>Format<Caret $mt={5} /></BigBtn>
        </GroupBody>
        <GroupLabel>Cells</GroupLabel>
      </Group>
      <Group $w={177}>
        <GroupBody $pad={10}>
          <StackCol $w={79}>
            <SmallRow $gap={4}><SumBox><FontGlyph $size={17}>Σ</FontGlyph></SumBox><span>AutoSum</span><Caret $ml={4} /></SmallRow>
            <SmallRow $gap={4}><FillDownIcon /> Fill <Caret /></SmallRow>
            <SmallRow $gap={4}><ClearIcon /> Clear <Caret /></SmallRow>
          </StackCol>
          <BigBtn $w={40}><BigIcon><SortIcon /></BigIcon>Sort &amp;<span>Filter <Caret /></span></BigBtn>
          <BigBtn $w={45}><BigIcon><FindIcon /></BigIcon>Find &amp;<span>Select <Caret /></span></BigBtn>
        </GroupBody>
        <GroupLabel>Editing</GroupLabel>
      </Group>
      <RibbonFill />
    </Ribbon>
    <Warning>
      <ShieldIcon />
      <WarnTitle>Security Warning</WarnTitle>
      <WarnText>Automatic update of links has been disabled</WarnText>
      <WarnBtn>Enable Content</WarnBtn>
      <WarnClose>✕</WarnClose>
    </Warning>
    <FormulaBar>
      <NameBox>D35<NameCaret /></NameBox>
      <FxPill>fx</FxPill>
      <FormulaText>{formula}</FormulaText>
      <FormulaEnd>
        <FormulaSpin><Tri $dir="up" $s={4} $c="#66707a" /><Tri $dir="down" $s={4} $c="#66707a" /></FormulaSpin>
        <FormulaDown><Caret $c="#667" /></FormulaDown>
      </FormulaEnd>
    </FormulaBar>
    <SheetArea>
      <VScroll>
        <Tri $dir="up" />
        <SplitBox><i /><i /><i /><i /></SplitBox>
        <Tri $dir="down" />
      </VScroll>
      <Sheet />
    </SheetArea>
    <TabBar>
      <HScroll>
        <HArrow $w={52} $pr={6}><Tri $dir="left" $s={5} /></HArrow>
        <HThumb><i /><i /><i /><i /><i /></HThumb>
        <HArrow $w={18}><Tri $dir="right" $s={5} /></HArrow>
        <Splitter />
      </HScroll>
      <TabFill />
      <SheetTab $w={40}><span><NewSheetIcon /></span></SheetTab>
      <SheetTab $w={80} $bg="#fff" $c="#222" $bold $size={13}><span>مارس٢٥</span></SheetTab>
      <SheetTab $w={63}><span>فبراير٢٥</span></SheetTab>
      <SheetTab $w={64}><span>يناير٢٥</span></SheetTab>
      <SheetTab $w={60} $bg="linear-gradient(#6a3f96,#8a62b0)" $c="#e9e2f2" $size={12.5} $latin><span>2024</span></SheetTab>
      <SheetTab $w={55} $bg="linear-gradient(#6a3f96,#8a62b0)" $c="#e9e2f2" $size={12.5} $latin><span>2023</span></SheetTab>
      <SheetTab $w={65} $bg="linear-gradient(#e41e3f,#f23a5a)" $c="#f8c8d4"><span>مراجعة</span></SheetTab>
      <SheetTab $w={94} $bg="linear-gradient(#fbc64e,#f8b43a)" $c="#40301a"><span>مج التأمينات</span></SheetTab>
      <SheetTab $w={105} $bg="linear-gradient(#6fa354,#8cb772)" $c="#22331a"><span>بيانات أساسية</span></SheetTab>
      <TabNav>
        <BarTri dir="left" bar /><BarTri dir="left" /><BarTri dir="right" /><BarTri dir="right" bar />
      </TabNav>
    </TabBar>
    <StatusBar>
      <StatusText>Ready</StatusText>
      <ViewGroup>
        <ViewBtn $on><GridViewIcon /></ViewBtn>
        <ViewBtn><PageViewIcon /></ViewBtn>
        <ViewBtn><BreakViewIcon /></ViewBtn>
        <ZoomPct>62%</ZoomPct>
        <RoundBtn>−</RoundBtn>
        <Slider><Thumb /><Tick /></Slider>
        <RoundBtn>+</RoundBtn>
      </ViewGroup>
    </StatusBar>
    <WatermarkBig>نفذلي</WatermarkBig>
    <WatermarkSmall>nafezly.com</WatermarkSmall>
  </Root>
);
export default App;
